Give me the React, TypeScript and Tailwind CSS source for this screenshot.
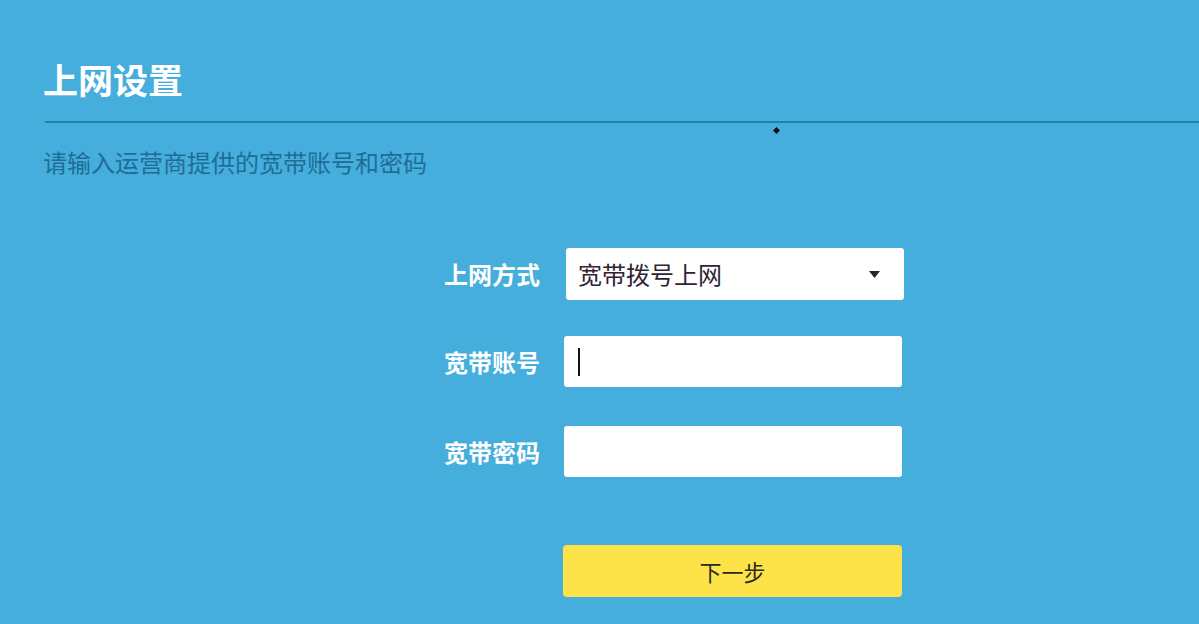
const fontCJK = { fontFamily: '"Noto Sans CJK SC", "Noto Sans", sans-serif' };

const Field = ({ label, children }: { label: string; children: React.ReactNode }) => (
  <div className="flex items-center">
    <span className="w-[120px] shrink-0 pr-[24px] text-right text-[24px] font-bold leading-none text-white">
      {label}
    </span>
    {children}
  </div>
);

export default function App() {
  return (
    <div
      className="relative h-[624px] w-[1199px] overflow-hidden bg-[#45aedc]"
      style={fontCJK}
    >
      {/* header */}
      <div className="pl-[43px] pt-[61px]">
        <h1 className="text-[35px] font-bold leading-none text-white">上网设置</h1>
      </div>
      <div className="ml-[45px] mt-[25px] h-[2px] bg-[#2282ad]" />
      <p className="ml-[43px] mt-[27px] text-[24px] leading-none text-[#1f6d97]">
        请输入运营商提供的宽带账号和密码
      </p>

      {/* form */}
      <div className="mt-[74px] flex flex-col pl-[444px]">
        <Field label="上网方式">
          <div className="ml-[2px] flex h-[52px] w-[338px] items-center justify-between rounded-[3px] bg-white pl-[12px] pr-[24px]">
            <span className="text-[24px] leading-none text-[#2e2433]">宽带拨号上网</span>
            <svg width="11" height="7" viewBox="0 0 11 7">
              <path d="M0 0 H11 L5.5 7 Z" fill="#2a2030" />
            </svg>
          </div>
        </Field>
        <div className="mt-[36px]">
          <Field label="宽带账号">
            <div className="flex h-[51px] w-[338px] items-center rounded-[3px] bg-white pl-[14px]">
              <span className="h-[28px] w-[2px] bg-[#111]" />
            </div>
          </Field>
        </div>
        <div className="mt-[39px]">
          <Field label="宽带密码">
            <div className="h-[51px] w-[338px] rounded-[3px] bg-white" />
          </Field>
        </div>
        <div className="mt-[68px] pl-[119px]">
          <button className="flex h-[52px] w-[339px] items-center justify-center rounded-[4px] bg-[#fde348] text-[22px] leading-none text-[#2b2a22]">
            下一步
          </button>
        </div>
      </div>

      {/* stray cursor dot */}
      <div className="absolute left-[774px] top-[128px] h-[5px] w-[5px] rotate-45 bg-[#111]" />
    </div>
  );
}
